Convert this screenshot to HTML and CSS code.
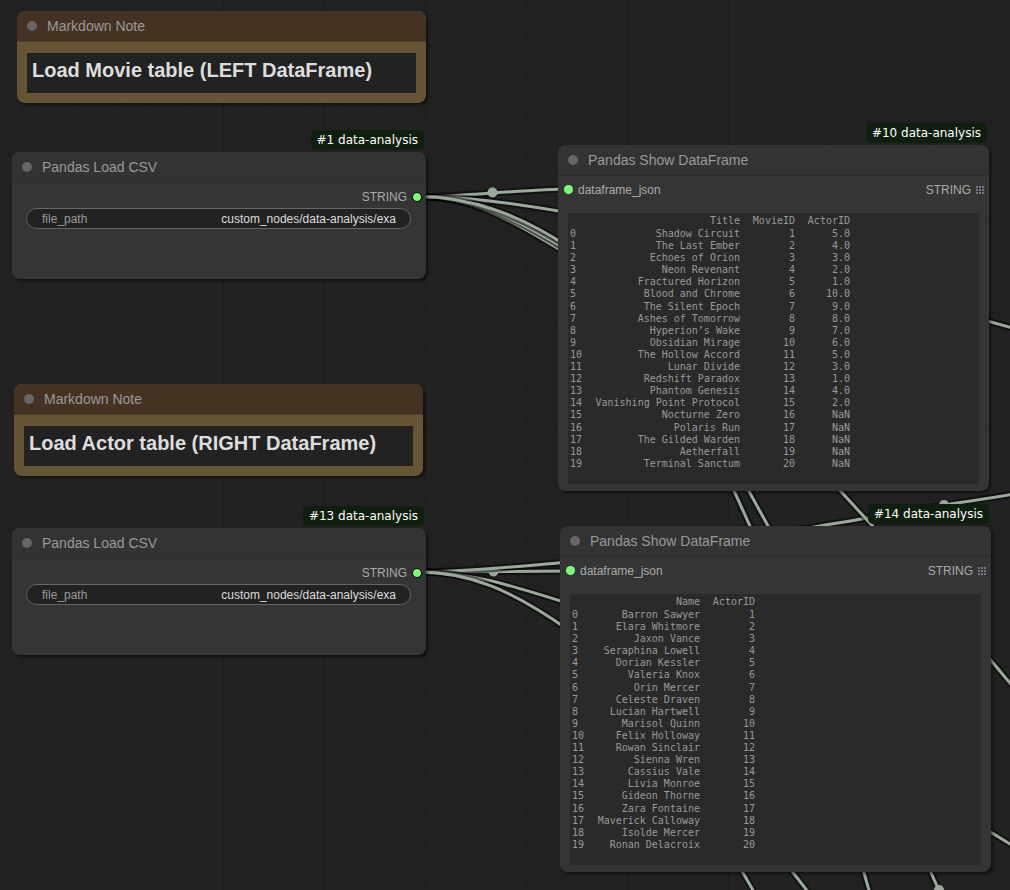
FILE: index.html
```html
<!DOCTYPE html>
<html lang="en">
<head>
<meta charset="utf-8">
<title>Data analysis workflow</title>
<link rel="stylesheet" href="styles.css">
</head>
<body>
<main class="canvas">
  <svg class="links" aria-hidden="true">
    <defs>
      <pattern id="grid" x="21" y="20" width="101" height="101" patternUnits="userSpaceOnUse">
        <path class="grid-minor" d="M10.500 0V101M20.500 0V101M30.500 0V101M40.500 0V101M50.500 0V101M60.500 0V101M70.500 0V101M80.500 0V101M90.500 0V101M0 10.500H101M0 20.500H101M0 30.500H101M0 40.500H101M0 50.500H101M0 60.500H101M0 70.500H101M0 80.500H101M0 90.500H101"/>
        <path class="grid-major" d="M.5 0V101M0 .5H101"/>
      </pattern>
      <path id="l1" d="M417 197C455 197 530 189 568 189"/>
      <path id="l2" d="M417 196.500C465 196.500 512 203 570 213"/>
      <path id="l3" d="M417 196.500C472 196.500 512 220 570 256"/>
      <path id="l4" d="M417 196.500C472 196.500 514 217 570 252"/>
      <path id="l5" d="M417 196.500C472 196.500 520 215 570 248"/>
      <path id="l6" d="M417 572C455 572 532 571 570 571"/>
      <path id="l7" d="M417 572C465 572 510 567 570 562"/>
      <path id="l8" d="M417 572C470 572 510 585 570 604"/>
      <path id="l9" d="M417 572C470 572 512 590 570 631"/>
      <path id="l10" d="M731 484L754 535"/>
      <path id="l11" d="M745 484L773 535"/>
      <path id="l12" d="M834 484L880 534"/>
      <path id="l13" d="M800 529C850 522 900 511 944 505C970 501 990 498 1020 493"/>
      <path id="l14" d="M980 319L1020 330"/>
      <path id="l15" d="M984 652L1020 695"/>
      <path id="l16" d="M984 828L1020 850"/>
      <path id="l17" d="M739 866L757 897"/>
      <path id="l18" d="M788 866L812 897"/>
      <path id="l19" d="M862 866L871 897"/>
      <path id="l20" d="M928 866L941 895"/>
    </defs>
    <rect width="100%" height="100%" fill="url(#grid)"/>
    <g class="link">
      <use class="halo" href="#l3"/><use class="wire" href="#l3"/>
      <use class="halo" href="#l4"/><use class="wire" href="#l4"/>
      <use class="halo" href="#l1"/><use class="wire" href="#l1"/>
      <use class="halo" href="#l2"/><use class="wire" href="#l2"/>
      <use class="halo" href="#l5"/><use class="wire" href="#l5"/>
      <circle class="knot" cx="492.500" cy="192.500" r="5"/>
      <use class="halo" href="#l6"/><use class="wire" href="#l6"/>
      <circle class="knot" cx="493.500" cy="571.500" r="5"/>
      <use class="halo" href="#l7"/><use class="wire" href="#l7"/>
      <use class="halo" href="#l8"/><use class="wire" href="#l8"/>
      <use class="halo" href="#l9"/><use class="wire" href="#l9"/>
      <use class="halo" href="#l10"/><use class="wire" href="#l10"/>
      <use class="halo" href="#l11"/><use class="wire" href="#l11"/>
      <use class="halo" href="#l13"/><use class="wire" href="#l13"/>
      <circle class="knot" cx="944" cy="505" r="5"/>
      <use class="halo" href="#l12"/><use class="wire" href="#l12"/>
      <use class="halo" href="#l14"/><use class="wire" href="#l14"/>
      <use class="halo" href="#l15"/><use class="wire" href="#l15"/>
      <use class="halo" href="#l16"/><use class="wire" href="#l16"/>
      <use class="halo" href="#l17"/><use class="wire" href="#l17"/>
      <use class="halo" href="#l18"/><use class="wire" href="#l18"/>
      <use class="halo" href="#l19"/><use class="wire" href="#l19"/>
      <use class="halo" href="#l20"/><use class="wire" href="#l20"/>
      <circle class="knot" cx="939" cy="890" r="5"/>
    </g>
  </svg>

  <section class="node note note-movie">
    <header class="title"><i class="dot"></i>Markdown Note</header>
    <div class="note-body"><h1 class="note-text">Load Movie table (LEFT DataFrame)</h1></div>
  </section>

  <section class="node loader loader-movie">
    <span class="badge">#1 data-analysis</span>
    <header class="title"><i class="dot"></i>Pandas Load CSV</header>
    <div class="slots slots-out"><span>STRING</span><i class="port port-out"></i></div>
    <div class="widget"><label for="path-movie">file_path</label><input id="path-movie" type="text" value="custom_nodes/data-analysis/exa"></div>
  </section>

  <section class="node note note-actor">
    <header class="title"><i class="dot"></i>Markdown Note</header>
    <div class="note-body"><h1 class="note-text">Load Actor table (RIGHT DataFrame)</h1></div>
  </section>

  <section class="node loader loader-actor">
    <span class="badge">#13 data-analysis</span>
    <header class="title"><i class="dot"></i>Pandas Load CSV</header>
    <div class="slots slots-out"><span>STRING</span><i class="port port-out"></i></div>
    <div class="widget"><label for="path-actor">file_path</label><input id="path-actor" type="text" value="custom_nodes/data-analysis/exa"></div>
  </section>

  <section class="node viewer viewer-movie">
    <span class="badge">#10 data-analysis</span>
    <header class="title"><i class="dot"></i>Pandas Show DataFrame</header>
    <div class="slots"><i class="port"></i><span>dataframe_json</span><span class="out">STRING</span>
      <svg class="list-port" viewBox="0 0 9 8" aria-hidden="true"><path d="M0 0h2v2H0zM3 0h2v2H3zM6 0h2v2H6zM0 3h2v2H0zM3 3h2v2H3zM6 3h2v2H6zM0 6h2v2H0zM3 6h2v2H3zM6 6h2v2H6z"/></svg>
    </div>
    <div class="output">
      <table class="frame">
        <colgroup><col class="c-index"><col class="c-title"><col class="c-id"><col class="c-id"></colgroup>
        <thead><tr><th></th><th>Title</th><th>MovieID</th><th>ActorID</th></tr></thead>
        <tbody>
          <tr><th>0</th><td>Shadow Circuit</td><td>1</td><td>5.0</td></tr>
          <tr><th>1</th><td>The Last Ember</td><td>2</td><td>4.0</td></tr>
          <tr><th>2</th><td>Echoes of Orion</td><td>3</td><td>3.0</td></tr>
          <tr><th>3</th><td>Neon Revenant</td><td>4</td><td>2.0</td></tr>
          <tr><th>4</th><td>Fractured Horizon</td><td>5</td><td>1.0</td></tr>
          <tr><th>5</th><td>Blood and Chrome</td><td>6</td><td>10.0</td></tr>
          <tr><th>6</th><td>The Silent Epoch</td><td>7</td><td>9.0</td></tr>
          <tr><th>7</th><td>Ashes of Tomorrow</td><td>8</td><td>8.0</td></tr>
          <tr><th>8</th><td>Hyperion’s Wake</td><td>9</td><td>7.0</td></tr>
          <tr><th>9</th><td>Obsidian Mirage</td><td>10</td><td>6.0</td></tr>
          <tr><th>10</th><td>The Hollow Accord</td><td>11</td><td>5.0</td></tr>
          <tr><th>11</th><td>Lunar Divide</td><td>12</td><td>3.0</td></tr>
          <tr><th>12</th><td>Redshift Paradox</td><td>13</td><td>1.0</td></tr>
          <tr><th>13</th><td>Phantom Genesis</td><td>14</td><td>4.0</td></tr>
          <tr><th>14</th><td>Vanishing Point Protocol</td><td>15</td><td>2.0</td></tr>
          <tr><th>15</th><td>Nocturne Zero</td><td>16</td><td>NaN</td></tr>
          <tr><th>16</th><td>Polaris Run</td><td>17</td><td>NaN</td></tr>
          <tr><th>17</th><td>The Gilded Warden</td><td>18</td><td>NaN</td></tr>
          <tr><th>18</th><td>Aetherfall</td><td>19</td><td>NaN</td></tr>
          <tr><th>19</th><td>Terminal Sanctum</td><td>20</td><td>NaN</td></tr>
        </tbody>
      </table>
    </div>
  </section>

  <section class="node viewer viewer-actor">
    <span class="badge">#14 data-analysis</span>
    <header class="title"><i class="dot"></i>Pandas Show DataFrame</header>
    <div class="slots"><i class="port"></i><span>dataframe_json</span><span class="out">STRING</span>
      <svg class="list-port" viewBox="0 0 9 8" aria-hidden="true"><path d="M0 0h2v2H0zM3 0h2v2H3zM6 0h2v2H6zM0 3h2v2H0zM3 3h2v2H3zM6 3h2v2H6zM0 6h2v2H0zM3 6h2v2H3zM6 6h2v2H6z"/></svg>
    </div>
    <div class="output">
      <table class="frame">
        <colgroup><col class="c-index"><col class="c-name"><col class="c-id"></colgroup>
        <thead><tr><th></th><th>Name</th><th>ActorID</th></tr></thead>
        <tbody>
          <tr><th>0</th><td>Barron Sawyer</td><td>1</td></tr>
          <tr><th>1</th><td>Elara Whitmore</td><td>2</td></tr>
          <tr><th>2</th><td>Jaxon Vance</td><td>3</td></tr>
          <tr><th>3</th><td>Seraphina Lowell</td><td>4</td></tr>
          <tr><th>4</th><td>Dorian Kessler</td><td>5</td></tr>
          <tr><th>5</th><td>Valeria Knox</td><td>6</td></tr>
          <tr><th>6</th><td>Orin Mercer</td><td>7</td></tr>
          <tr><th>7</th><td>Celeste Draven</td><td>8</td></tr>
          <tr><th>8</th><td>Lucian Hartwell</td><td>9</td></tr>
          <tr><th>9</th><td>Marisol Quinn</td><td>10</td></tr>
          <tr><th>10</th><td>Felix Holloway</td><td>11</td></tr>
          <tr><th>11</th><td>Rowan Sinclair</td><td>12</td></tr>
          <tr><th>12</th><td>Sienna Wren</td><td>13</td></tr>
          <tr><th>13</th><td>Cassius Vale</td><td>14</td></tr>
          <tr><th>14</th><td>Livia Monroe</td><td>15</td></tr>
          <tr><th>15</th><td>Gideon Thorne</td><td>16</td></tr>
          <tr><th>16</th><td>Zara Fontaine</td><td>17</td></tr>
          <tr><th>17</th><td>Maverick Calloway</td><td>18</td></tr>
          <tr><th>18</th><td>Isolde Mercer</td><td>19</td></tr>
          <tr><th>19</th><td>Ronan Delacroix</td><td>20</td></tr>
        </tbody>
      </table>
    </div>
  </section>
</main>
</body>
</html>
```
FILE: styles.css
```css
* { box-sizing: border-box; }
body {
  margin: 0;
  background: #222;
  color: #999;
  font: 12px/16px "Liberation Sans", Arial, sans-serif;
}
.canvas {
  position: relative;
  height: 100vh;
  overflow: hidden;
}

/* Grid and wires */
.links {
  position: absolute;
  inset: 0;
  width: 100%;
  height: 100%;
}
.grid-minor { stroke: #202020; fill: none; }
.grid-major { stroke: #1d1d1d; fill: none; }
.link { fill: none; }
.halo { stroke: rgba(0, 0, 0, 0.5); stroke-width: 7; }
.wire { stroke: #9aa99a; stroke-width: 3; }
.knot { fill: #9aa99a; }

/* Nodes, placed freely on the canvas */
.node {
  position: absolute;
  display: flex;
  flex-direction: column;
  background: #353535;
  border-radius: 8px;
  box-shadow: 2px 2px 3px rgba(0, 0, 0, 0.5);
}
.note { width: 409px; background: #653; }
.loader { width: 414px; padding-bottom: 50px; }
.viewer { width: 431px; padding-bottom: 7px; }
.note-movie { left: 17px; top: 11px; }
.loader-movie { left: 12px; top: 152px; }
.note-actor { left: 14px; top: 384px; }
.loader-actor { left: 12px; top: 528px; }
.viewer-movie { left: 558px; top: 145px; }
.viewer-actor { left: 560px; top: 526px; }

.title {
  display: flex;
  align-items: center;
  gap: 10px;
  height: 31px;
  padding-left: 10px;
  border-bottom: 1px solid #2c2c2c;
  border-radius: 8px 8px 0 0;
  background: #333;
  font-size: 14px;
}
.dot {
  width: 10px;
  height: 10px;
  border-radius: 50%;
  background: #666;
}
.badge {
  position: absolute;
  right: 2px;
  bottom: calc(100% + 2px);
  padding: 2px 6px;
  border-radius: 5px;
  background: #0f1f0f;
  color: #fff;
  font: 12px/16px "DejaVu Sans", sans-serif;
  white-space: nowrap;
}

.note .title { background: #432; border-bottom-color: #4f3d28; }
.note-body { padding: 11px 10px 10px; }
.note-text {
  margin: 0;
  padding: 5px 5px 11px;
  background: #222;
  color: #ddd;
  font-size: 20px;
  line-height: 24px;
}

.slots {
  display: flex;
  align-items: center;
  height: 27px;
  gap: 5px;
  padding: 0 4px 0 6px;
  color: #aaa;
}
.slots-out { justify-content: flex-end; }
.out { margin-left: auto; }
.port {
  width: 9px;
  height: 9px;
  border-radius: 50%;
  background: #7f7;
}
.port-out {
  width: 10px;
  height: 10px;
  border: 1px solid #000;
}
.list-port { width: 9px; height: 8px; fill: #778; }

.widget {
  display: flex;
  align-items: center;
  justify-content: space-between;
  height: 21px;
  margin: -2px 15px 0 14px;
  padding: 0 14px 0 15px;
  border: 1px solid #666;
  border-radius: 11px;
  background: #222;
}
.widget input {
  flex: 1;
  min-width: 0;
  padding: 0;
  border: 0;
  background: none;
  color: #ddd;
  font: inherit;
  text-align: right;
  outline: none;
}

.output {
  margin: 10px 10px 0;
  padding: 2px 2px 14px;
  background: #2a2a2a;
}
.frame {
  height: 255px;
  border-collapse: collapse;
  table-layout: fixed;
  width: min-content;
  color: #999;
  font: 10px/12px "DejaVu Sans Mono", monospace;
}
.frame th,
.frame td {
  padding: 0;
  font-weight: normal;
  text-align: right;
  vertical-align: top;
  white-space: nowrap;
}
.frame thead th { height: 13px; }
.frame tbody th { text-align: left; }
.c-index { width: 18px; }
.c-title { width: 152px; }
.c-name { width: 110px; }
.c-id { width: 55px; }
```
